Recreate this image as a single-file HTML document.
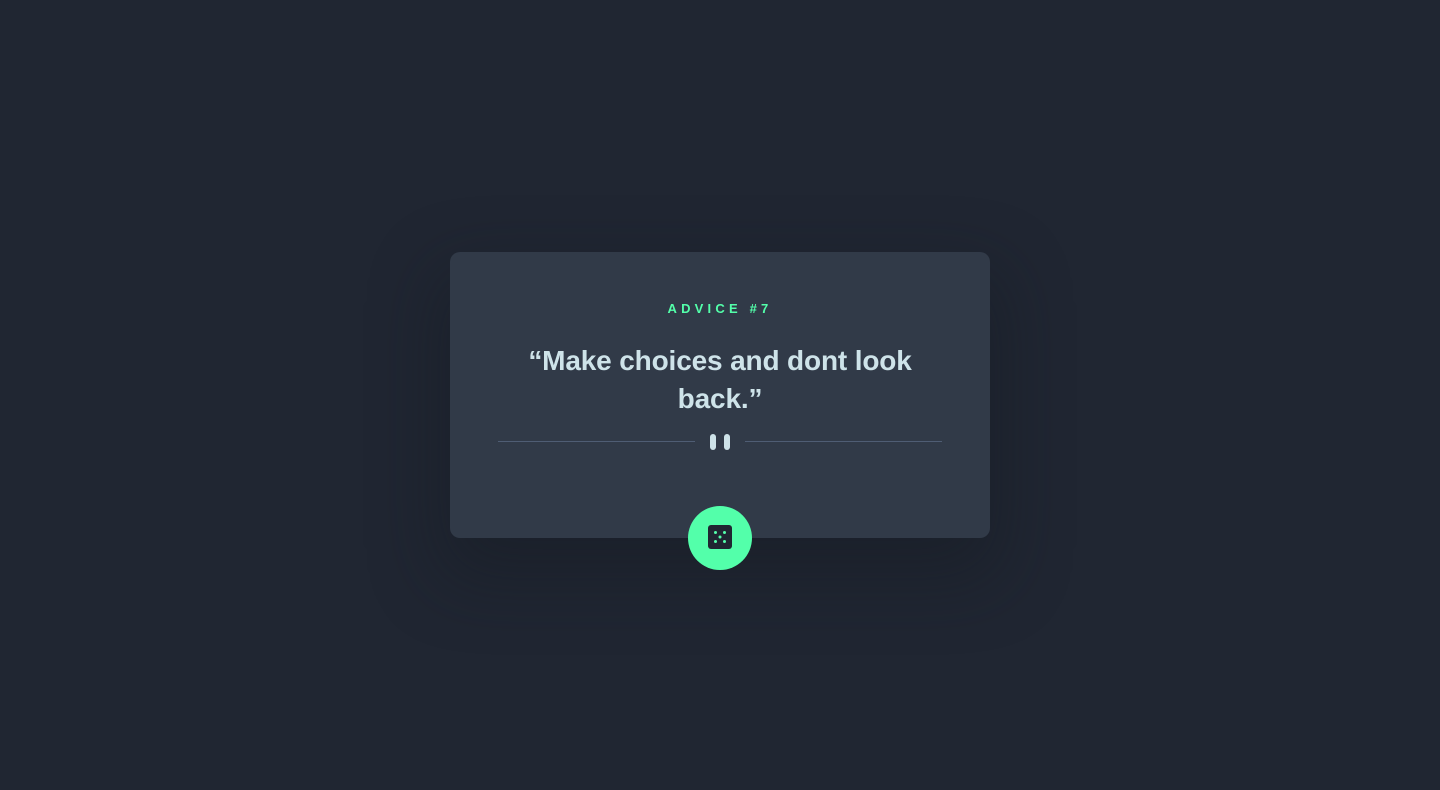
<!DOCTYPE html>
<html><head><meta charset="utf-8"><style>
html,body{margin:0;height:100%;background:#202632;font-family:"Liberation Sans",sans-serif;}
.card{position:absolute;left:450px;top:252px;width:540px;height:286px;background:#313a48;border-radius:10px;box-shadow:0 30px 70px 10px rgba(20,24,32,.4);}
.lbl{position:absolute;left:0;right:0;top:301px;font-size:13px;font-weight:bold;letter-spacing:4.2px;color:#53ffaa;text-align:center;}
.q{position:absolute;left:490px;width:460px;top:342px;font-size:28px;font-weight:bold;line-height:38px;color:#cee3e9;text-align:center;letter-spacing:-0.15px;}
.ln{position:absolute;top:441px;height:1px;background:#4f5d74;width:197px;}
.bar{position:absolute;top:434px;width:6px;height:16px;border-radius:3px;background:#cee3e9;}
.btn{position:absolute;left:688px;top:506px;width:64px;height:64px;border-radius:50%;background:#53ffaa;}
</style></head><body>
<div class="card"></div>
<div class="lbl">ADVICE #7</div>
<div class="q">“Make choices and dont look<br>back.”</div>
<div class="ln" style="left:498px"></div>
<div class="ln" style="left:745px"></div>
<div class="bar" style="left:710px"></div>
<div class="bar" style="left:724px"></div>
<div class="btn"><svg width="24" height="24" style="position:absolute;left:20px;top:19px" viewBox="0 0 24 24"><rect width="24" height="24" rx="3" fill="#202632"/><g fill="#53ffaa"><circle cx="7.5" cy="7.5" r="1.5"/><circle cx="16.5" cy="7.5" r="1.5"/><circle cx="12" cy="12" r="1.5"/><circle cx="7.5" cy="16.5" r="1.5"/><circle cx="16.5" cy="16.5" r="1.5"/></g></svg></div>
</body></html>
